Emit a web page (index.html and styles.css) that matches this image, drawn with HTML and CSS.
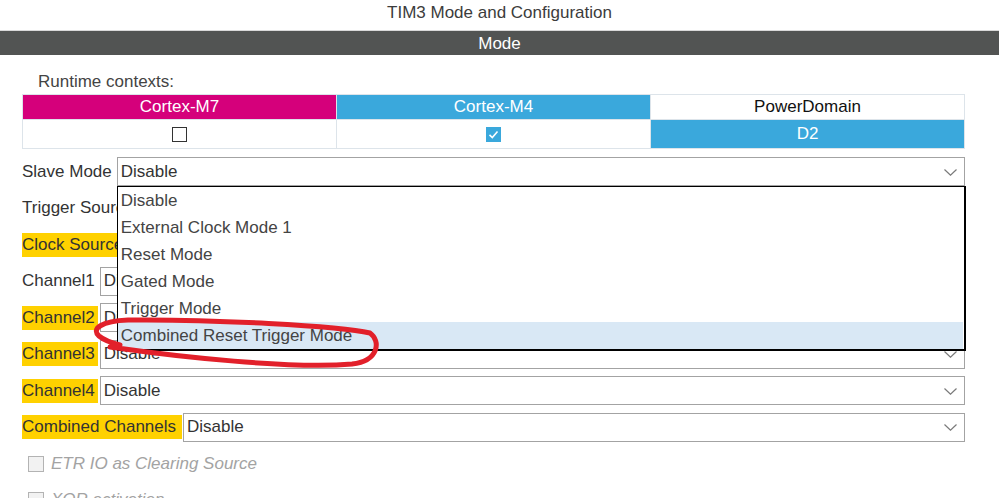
FILE: index.html
```html
<!DOCTYPE html>
<html>
<head>
<meta charset="utf-8">
<link rel="stylesheet" href="styles.css">
</head>
<body>
<div class="page">
  <div class="title">TIM3 Mode and Configuration</div>
  <div class="bar">Mode</div>
  <div class="content">
    <div class="rc-label">Runtime contexts:</div>
    <table class="ctx">
      <tr class="head">
        <th class="m7">Cortex-M7</th>
        <th class="m4">Cortex-M4</th>
        <th class="pd">PowerDomain</th>
      </tr>
      <tr class="body">
        <td><span class="tcb"></span></td>
        <td><svg class="tcb-on" width="15" height="15" viewBox="0 0 15 15"><rect x="0" y="0" width="15" height="15" fill="#3aa8dc"/><polyline points="3.5,7.8 6.3,10.5 11.5,4.5" fill="none" stroke="#fff" stroke-width="1.6"/></svg></td>
        <td class="d2">D2</td>
      </tr>
    </table>

    <div class="form">
      <div class="row">
        <span class="lbl">Slave Mode</span>
        <div class="select open">
          <span class="val">Disable</span>
          <svg class="chev" width="13" height="7" viewBox="0 0 13 7"><polyline points="0.5,0.5 6.5,6.2 12.5,0.5" fill="none" stroke="#7a7a7a" stroke-width="1.2"/></svg>
          <ul class="dropdown">
            <li>Disable</li>
            <li>External Clock Mode 1</li>
            <li>Reset Mode</li>
            <li>Gated Mode</li>
            <li>Trigger Mode</li>
            <li class="sel">Combined Reset Trigger Mode</li>
          </ul>
        </div>
      </div>
      <div class="row">
        <span class="lbl">Trigger Source</span>
        <div class="select"><span class="val">Disable</span></div>
      </div>
      <div class="row">
        <span class="lbl hl">Clock Source</span>
        <div class="select"><span class="val">Disable</span></div>
      </div>
      <div class="row">
        <span class="lbl">Channel1</span>
        <div class="select"><span class="val">Disable</span></div>
      </div>
      <div class="row">
        <span class="lbl hl">Channel2</span>
        <div class="select"><span class="val">Disable</span></div>
      </div>
      <div class="row">
        <span class="lbl hl">Channel3</span>
        <div class="select"><span class="val">Disable</span>
          <svg class="chev" width="13" height="7" viewBox="0 0 13 7"><polyline points="0.5,0.5 6.5,6.2 12.5,0.5" fill="none" stroke="#7a7a7a" stroke-width="1.2"/></svg>
        </div>
      </div>
      <div class="row">
        <span class="lbl hl">Channel4</span>
        <div class="select"><span class="val">Disable</span>
          <svg class="chev" width="13" height="7" viewBox="0 0 13 7"><polyline points="0.5,0.5 6.5,6.2 12.5,0.5" fill="none" stroke="#7a7a7a" stroke-width="1.2"/></svg>
        </div>
      </div>
      <div class="row">
        <span class="lbl hl wide">Combined Channels</span>
        <div class="select"><span class="val">Disable</span>
          <svg class="chev" width="13" height="7" viewBox="0 0 13 7"><polyline points="0.5,0.5 6.5,6.2 12.5,0.5" fill="none" stroke="#7a7a7a" stroke-width="1.2"/></svg>
        </div>
      </div>
      <div class="check-row">
        <span class="cb"></span>
        <span class="ctext">ETR IO as Clearing Source</span>
      </div>
      <div class="check-row">
        <span class="cb"></span>
        <span class="ctext">XOR activation</span>
      </div>
    </div>
  </div>

  <svg class="annot" width="999" height="498" viewBox="0 0 999 498">
    <path d="M 110 347 C 180 357, 290 369, 352 364 C 379 361, 381 341, 370 333 C 340 326, 210 319, 128 320 C 101 321, 91 329, 99 336 C 105 341, 112 343, 120 345" fill="none" stroke="#e2202a" stroke-width="5" stroke-linecap="round" stroke-linejoin="round"/>
  </svg>
</div>
</body>
</html>
```

FILE: styles.css
```css
html, body {
  margin: 0;
  padding: 0;
}
body {
  font-family: "Liberation Sans", Arial, sans-serif;
  font-size: 17px;
  color: #333;
  background: #fff;
}
.page {
  position: relative;
  width: 999px;
  height: 498px;
  overflow: hidden;
}
.title {
  height: 30px;
  line-height: 26px;
  text-align: center;
  color: #3c3c3c;
  border-bottom: 1px solid #d9d9d9;
}
.bar {
  height: 24px;
  line-height: 25px;
  background: #525453;
  color: #fff;
  text-align: center;
}
.content {
  padding: 17px 34px 0 22px;
}
.rc-label {
  padding-left: 16px;
  line-height: 20px;
  height: 20px;
  color: #444;
  margin-bottom: 2px;
}
.ctx {
  width: 100%;
  border-collapse: collapse;
  table-layout: fixed;
}
.ctx th, .ctx td {
  border: 1px solid #dde4ea;
  padding: 0;
  text-align: center;
  font-weight: normal;
}
.ctx .head th {
  height: 23px;
  line-height: 24px;
}
.ctx .body td {
  height: 28px;
}
.m7 {
  background: #d5007b;
  color: #fff;
}
.m4 {
  background: #3aa8dc;
  color: #fff;
}
.pd {
  background: #fff;
  color: #111;
}
.d2 {
  background: #3aa8dc;
  color: #fff;
}
.tcb {
  display: inline-block;
  width: 15px;
  height: 15px;
  box-sizing: border-box;
  border: 1.5px solid #333;
  vertical-align: middle;
}
.tcb-on {
  display: inline-block;
  vertical-align: middle;
}
.form {
  display: flex;
  flex-direction: column;
  gap: 7.5px;
  margin-top: 8px;
}
.row {
  display: flex;
  align-items: center;
  height: 29px;
}
.lbl {
  white-space: nowrap;
  line-height: 24px;
  padding-right: 3px;
  margin-right: 2px;
  color: #333;
}
.lbl.hl {
  background: #ffd100;
}
.lbl.wide {
  padding-right: 6px;
  margin-right: 1px;
}
.select {
  flex: 1;
  height: 29px;
  box-sizing: border-box;
  border: 1px solid #a3a3a3;
  display: flex;
  align-items: center;
  justify-content: space-between;
  padding: 0 7px 0 3px;
  background: #fff;
  color: #333;
  min-width: 0;
}
.select.open {
  position: relative;
}
.chev {
  display: block;
  margin-top: 1px;
}
.dropdown {
  position: absolute;
  z-index: 10;
  top: 28px;
  left: -1px;
  right: -2px;
  margin: 0;
  padding: 0;
  list-style: none;
  background: #fff;
  border: 1px solid #000;
  border-right-width: 2px;
  border-bottom-width: 2px;
}
.dropdown li {
  height: 27px;
  line-height: 28px;
  padding-left: 3px;
  color: #444;
  white-space: nowrap;
}
.dropdown li.sel {
  background: #d9e8f5;
  margin-right: 1px;
}
.check-row {
  display: flex;
  align-items: center;
  height: 29px;
  padding-left: 6px;
  gap: 7px;
}
.cb {
  display: inline-block;
  width: 16px;
  height: 16px;
  box-sizing: border-box;
  border: 1px solid #b3b3b3;
  background: #f2f2f2;
}
.ctext {
  font-style: italic;
  color: #a3a3a3;
}
.annot {
  position: absolute;
  z-index: 20;
  top: 0;
  left: 0;
  pointer-events: none;
}
```
